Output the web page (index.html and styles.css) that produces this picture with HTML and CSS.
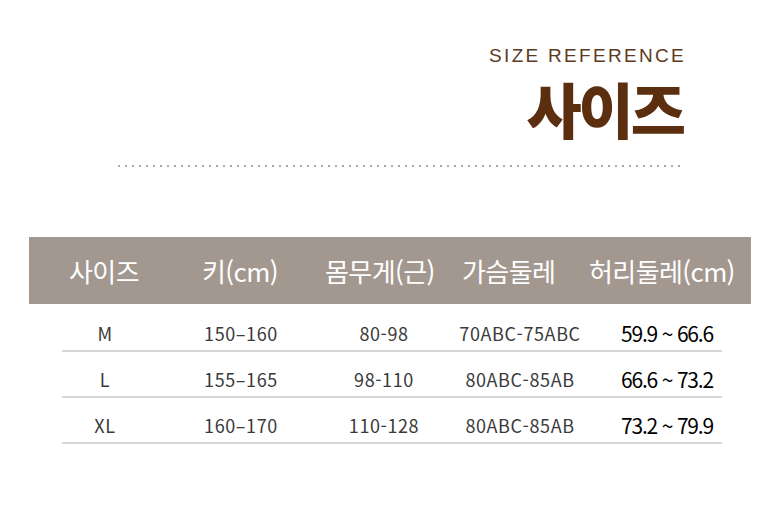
FILE: index.html
```html
<!DOCTYPE html>
<html lang="ko">
<head>
<meta charset="utf-8">
<title>사이즈</title>
<link rel="stylesheet" href="styles.css">
</head>
<body>
<div class="page">
  <div class="title-block">
    <div class="eyebrow">SIZE REFERENCE</div>
    <h1 class="title">사이즈</h1>
  </div>
  <div class="dots"></div>
  <div class="table">
    <div class="thead">
      <div>사이즈</div>
      <div>키(cm)</div>
      <div>몸무게(근)</div>
      <div>가슴둘레</div>
      <div>허리둘레(cm)</div>
    </div>
    <div class="row">
      <div>M</div>
      <div>150–160</div>
      <div>80-98</div>
      <div>70ABC-75ABC</div>
      <div class="waist">59.9 ~ 66.6</div>
    </div>
    <div class="row">
      <div>L</div>
      <div>155–165</div>
      <div>98-110</div>
      <div>80ABC-85AB</div>
      <div class="waist">66.6 ~ 73.2</div>
    </div>
    <div class="row">
      <div>XL</div>
      <div>160–170</div>
      <div>110-128</div>
      <div>80ABC-85AB</div>
      <div class="waist">73.2 ~ 79.9</div>
    </div>
  </div>
</div>
</body>
</html>
```
FILE: styles.css
```css
* { box-sizing: border-box; }
html, body { margin: 0; padding: 0; background: #fff; }
body { width: 780px; height: 511px; overflow: hidden; font-family: "Noto Sans CJK KR", "Noto Sans", sans-serif; }

.page { padding-top: 47px; }

.title-block {
  display: flex;
  flex-direction: column;
  align-items: flex-end;
  padding-right: 94px;
}
.eyebrow {
  font-family: "Liberation Sans", sans-serif;
  font-size: 19px;
  line-height: 17px;
  letter-spacing: 2.3px;
  color: #5b3a22;
}
.title {
  margin: 0 3px 0 0;
  font-family: "Noto Sans CJK KR", sans-serif;
  font-weight: 900;
  font-size: 60px;
  line-height: 87px;
  letter-spacing: -3px;
  color: #5a2e0e;
}

.dots {
  margin: 14px 0 0 118px;
  width: 562px;
  height: 2px;
  background-image: repeating-linear-gradient(90deg, #a8a8a8 0 2px, transparent 2px 7px);
}

.table { margin-top: 70px; }

.thead {
  margin-left: 29px;
  width: 722px;
  height: 67px;
  background: #a39890;
  color: #fff;
  display: grid;
  grid-template-columns: 133px 123px 137px 127px 1fr;
  padding-left: 40px;
  align-items: center;
  font-size: 26px;
  letter-spacing: -0.6px;
}

.row {
  margin-left: 62px;
  width: 660px;
  height: 46px;
  border-bottom: 2px solid #d6d6d6;
  display: grid;
  grid-template-columns: 86px 186px 100px 172px 116px;
  align-items: center;
  padding-top: 10px;
  font-size: 18px;
  letter-spacing: 0.6px;
  color: #3a3a3a;
  text-align: center;
}
.thead + .row { margin-top: 2px; }
.row > div { white-space: nowrap; }
.row .waist {
  color: #000;
  font-size: 21px;
  letter-spacing: -1.2px;
  padding-left: 6px;
}
```
